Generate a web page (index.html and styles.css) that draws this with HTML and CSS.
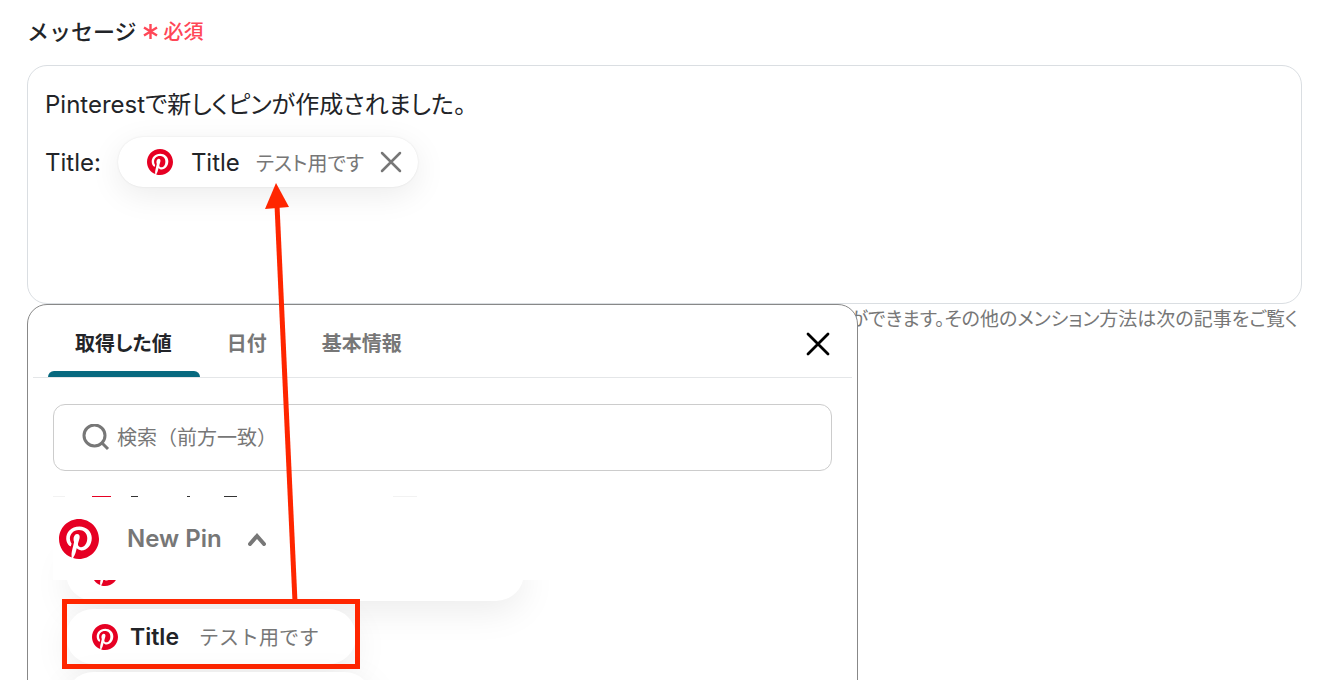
FILE: index.html
```html
<!DOCTYPE html>
<html lang="ja">
<head>
    <meta charset="UTF-8">
    <meta name="viewport" content="width=device-width, initial-scale=1.0">
    <title>メッセージ</title>
    <link rel="stylesheet" href="styles.css">
</head>
<body>
    <svg class="defs" aria-hidden="true">
        <symbol id="pin-logo" viewBox="0 0 24 24">
            <circle cx="12" cy="12" r="11.5" fill="#fff"/>
            <path fill="#e60023" d="M12 0C5.373 0 0 5.372 0 12c0 5.084 3.163 9.426 7.627 11.174-.105-.949-.2-2.405.042-3.441.218-.937 1.407-5.965 1.407-5.965s-.359-.719-.359-1.782c0-1.668.967-2.914 2.171-2.914 1.023 0 1.518.769 1.518 1.69 0 1.029-.655 2.568-.994 3.995-.283 1.194.599 2.169 1.777 2.169 2.133 0 3.772-2.249 3.772-5.495 0-2.873-2.064-4.882-5.012-4.882-3.414 0-5.418 2.561-5.418 5.207 0 1.031.397 2.138.893 2.738a.36.36 0 0 1 .083.345l-.333 1.36c-.053.22-.174.267-.402.161-1.499-.698-2.436-2.889-2.436-4.649 0-3.785 2.75-7.262 7.929-7.262 4.163 0 7.398 2.967 7.398 6.931 0 4.136-2.607 7.464-6.227 7.464-1.216 0-2.359-.631-2.75-1.378l-.748 2.853c-.271 1.043-1.002 2.35-1.492 3.146 1.124.347 2.317.535 3.554.535 6.627 0 12-5.373 12-12S18.627 0 12 0z"/>
        </symbol>
    </svg>

    <main class="page">
        <div class="label-row">
            <span class="label" id="message-label">メッセージ</span>
            <span class="required">
                <svg width="15" height="20" viewBox="0 0 15 20" aria-hidden="true">
                    <path d="M7.500 4v15M1 7.500l13 8M14 7.500l-13 8" stroke="currentColor" stroke-width="2.400" fill="none"/>
                </svg>
                必須
            </span>
        </div>

        <div class="field">
            <div class="message" role="textbox" aria-multiline="true" aria-labelledby="message-label" contenteditable="true" spellcheck="false">
                <div class="line">Pinterestで新しくピンが作成されました。</div>
                <div class="line">
                    <span>Title:</span>
                    <span class="mention" contenteditable="false">
                        <svg class="logo-small"><use href="#pin-logo"/></svg>
                        <span class="mention-name">Title</span>
                        <span class="mention-value">テスト用です</span>
                        <button class="icon-button" type="button" aria-label="削除">
                            <svg width="22" height="22" viewBox="0 0 22 22"><path d="M2 2l18 18M20 2L2 20" stroke="#777" stroke-width="2.500" stroke-linecap="round"/></svg>
                        </button>
                    </span>
                </div>
            </div>
            <p class="hint">ができます。その他のメンション方法は次の記事をご覧く</p>

            <section class="picker" aria-label="値の選択">
                <div class="tabs" role="tablist">
                    <button class="tab active" type="button" role="tab" aria-selected="true">取得した値</button>
                    <button class="tab" type="button" role="tab">日付</button>
                    <button class="tab" type="button" role="tab">基本情報</button>
                    <button class="icon-button close" type="button" aria-label="閉じる">
                        <svg width="24" height="24" viewBox="0 0 24 24"><path d="M2 2l20 20M22 2L2 22" stroke="#000" stroke-width="2.800" stroke-linecap="round"/></svg>
                    </button>
                </div>

                <label class="search">
                    <svg width="28" height="28" viewBox="0 0 28 28" aria-hidden="true"><circle cx="12.500" cy="11.500" r="10.500"/><path d="M20 19l6 6"/></svg>
                    <input type="search" placeholder="検索（前方一致）" aria-label="検索">
                </label>

                <div class="values">
                    <!-- bottom edge of the row scrolled under the group header -->
                    <svg class="scrolled-row" width="400" height="1" aria-hidden="true">
                        <path d="M0 0h12M340 0h24" stroke="#f2f2f2" stroke-width="2"/>
                        <path d="M39 0h19" stroke="#e60023" stroke-width="2"/>
                        <path d="M78 0h7M134 0h3M171 0h13" stroke="#333" stroke-width="2"/>
                    </svg>
                    <button class="group" type="button" aria-expanded="true">
                        <svg class="logo-large"><use href="#pin-logo"/></svg>
                        <span>New Pin</span>
                        <svg class="chevron" width="18" height="14" viewBox="0 0 18 14"><path d="M2 12l7-8 7 8"/></svg>
                    </button>
                    <div class="value cut-top">
                        <svg class="logo-small"><use href="#pin-logo"/></svg>
                    </div>
                    <button class="value" type="button">
                        <svg class="logo-small"><use href="#pin-logo"/></svg>
                        <span class="value-name">Title</span>
                        <span class="value-sample">テスト用です</span>
                        <span class="marker"></span>
                    </button>
                    <div class="value next"></div>
                </div>
            </section>
        </div>

        <svg class="arrow" width="340" height="620" aria-hidden="true">
            <path d="M277 205L295 602" stroke="#ff2600" stroke-width="5"/>
            <path d="M276 183L289 207L265 209z" fill="#ff2600"/>
        </svg>
    </main>
</body>
</html>
```
FILE: styles.css
```css
:root {
    --color-text: #222428;
    --color-muted: #777;
    --color-border: #dadee2;
    --color-accent: #07697f;
    --color-required: #ff4757;
    --color-marker: #ff2600;
}

* {
    box-sizing: border-box;
}

body {
    margin: 0;
    min-height: 100vh;
    background: #fff;
    color: var(--color-text);
    font-family: Inter, "Noto Sans CJK JP", sans-serif;
    font-size: 24px;
}

button {
    padding: 0;
    border: none;
    background: none;
    color: inherit;
    font: inherit;
    cursor: pointer;
}

svg {
    display: block;
    flex-shrink: 0;
}

.defs {
    position: absolute;
    width: 0;
    height: 0;
}

.page {
    position: relative;
    height: 100vh;
    padding: 12px 40px 0 27px;
    overflow: hidden;
}

.label-row {
    display: flex;
    align-items: center;
    gap: 6px;
    height: 53px;
    padding-bottom: 17px;
}

.label {
    font-size: 22px;
    font-weight: 500;
}

.required {
    display: flex;
    align-items: center;
    gap: 6px;
    color: var(--color-required);
    font-size: 20px;
    font-weight: 500;
}

.field {
    position: relative;
}

.message {
    min-height: 239px;
    padding: 11px 17px;
    border: 1px solid var(--color-border);
    border-radius: 20px;
    outline: none;
    font-feature-settings: "palt";
}

.line {
    display: flex;
    align-items: center;
    gap: 17px;
    height: 50px;
    margin-bottom: 10px;
}

.mention {
    display: flex;
    align-items: center;
    height: 50px;
    padding: 0 16px 0 29px;
    border-radius: 25px;
    background: #fff;
    box-shadow: 0 8px 32px rgba(0, 0, 0, 0.08), 0 0 2px rgba(0, 0, 0, 0.1);
}

.mention-name {
    margin: 0 16px 0 18px;
}

.mention-value {
    margin-right: 16px;
    color: var(--color-muted);
    font-size: 20px;
}

.logo-small {
    width: 26px;
    height: 26px;
}

.logo-large {
    width: 40px;
    height: 40px;
}

.hint {
    margin: 0;
    padding-right: 4px;
    overflow: hidden;
    color: var(--color-muted);
    font-size: 19px;
    line-height: 32px;
    text-align: right;
    white-space: nowrap;
    font-feature-settings: "palt";
}

.picker {
    position: absolute;
    top: 239px;
    left: 0;
    width: 100%;
    max-width: 831px;
    min-height: 420px;
    padding: 0 5px;
    border: 1px solid #888;
    border-radius: 20px;
    background: #fff;
}

.tabs {
    display: flex;
    height: 73px;
    padding: 0 22px 0 15px;
    border-bottom: 1px solid #e4e6e8;
}

.tab {
    padding: 2px 28px 0 27px;
    color: var(--color-muted);
    font-size: 20px;
    font-weight: 600;
    font-feature-settings: "palt";
}

.tab.active {
    position: relative;
    color: var(--color-text);
}

.tab.active::after {
    content: "";
    position: absolute;
    right: 0;
    bottom: 0;
    left: 0;
    height: 6px;
    border-radius: 6px 6px 0 0;
    background: var(--color-accent);
}

.close {
    margin: 6px 0 0 auto;
}

.search {
    display: flex;
    align-items: center;
    gap: 7px;
    height: 67px;
    margin: 26px 20px 25px;
    padding: 0 28px;
    border: 1px solid #ccc;
    border-radius: 12px;
}

.search svg {
    fill: none;
    stroke: var(--color-muted);
    stroke-width: 3;
}

.search input {
    flex: 1;
    min-width: 0;
    padding: 0;
    border: none;
    outline: none;
    background: none;
    font: inherit;
    font-size: 20px;
}

.search input::placeholder {
    color: var(--color-muted);
}

.values {
    padding: 0 20px;
}

.group {
    position: relative;
    z-index: 1;
    display: flex;
    align-items: center;
    width: 100%;
    height: 83px;
    padding-left: 6px;
    background: #fff;
    color: var(--color-muted);
    font-weight: 600;
}

.group span {
    margin: 0 26px 0 28px;
}

.chevron {
    fill: none;
    stroke: var(--color-muted);
    stroke-width: 4;
    stroke-linecap: round;
}

.value {
    position: relative;
    display: flex;
    align-items: center;
    width: 290px;
    height: 55px;
    margin: 8px 0 0 13px;
    padding-left: 26px;
    border-radius: 28px;
    background: #fff;
    box-shadow: 0 10px 36px rgba(0, 0, 0, 0.08);
}

.cut-top {
    width: 458px;
    height: 56px;
    margin-top: -35px;
}

.value-name {
    margin: 0 20px 0 12px;
    font-size: 23px;
    font-weight: 600;
}

.value-sample {
    color: var(--color-muted);
    font-size: 20px;
}

.next {
    width: 306px;
}

/* red frame around the value to pick */
.marker {
    position: absolute;
    inset: -10px -4px -5px;
    border: 5px solid var(--color-marker);
}

.arrow {
    position: absolute;
    z-index: 2;
    top: 0;
    left: 0;
    pointer-events: none;
}
```
